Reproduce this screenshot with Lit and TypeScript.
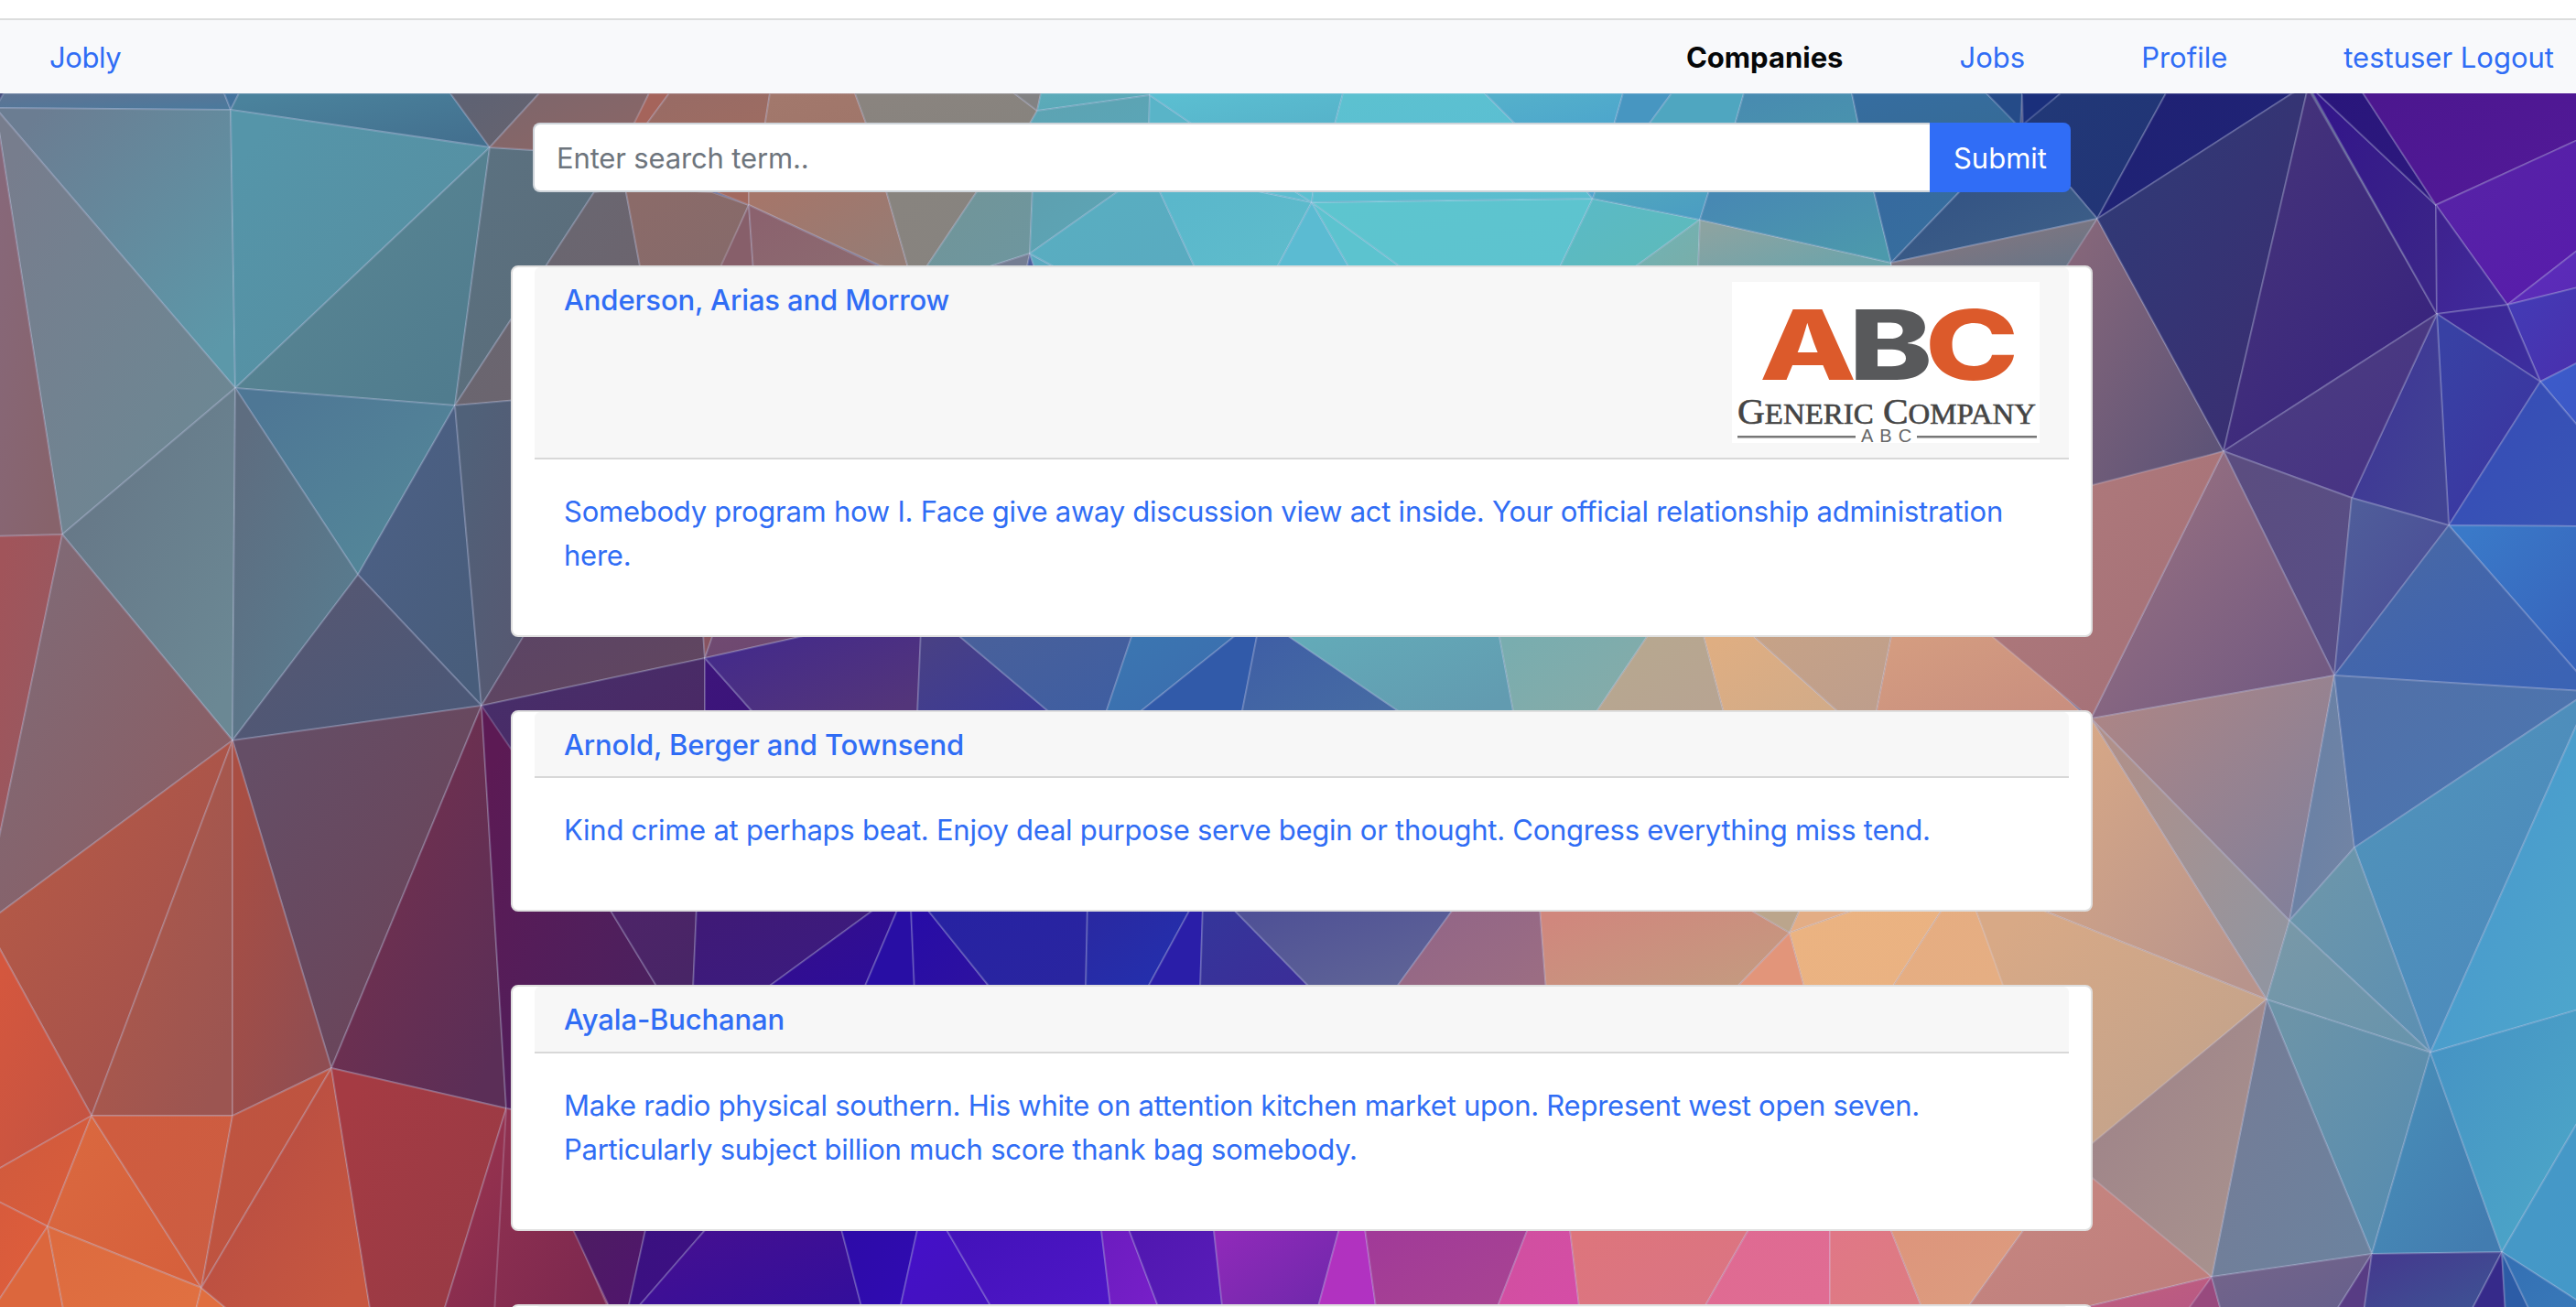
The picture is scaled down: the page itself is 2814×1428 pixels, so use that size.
import { LitElement, html, svg, css } from "lit";
import { customElement, property } from "lit/decorators.js";

/** Facets of the low-poly wallpaper: outline, start colour, end colour. */
const FACETS: [string, string, string][] = [
  // left side
  ["-5,118 4,102 245,102 252,120", "#5d7494", "#4c799c"],
  ["245,102 261,102 252,120", "#42729d", "#44739b"],
  ["261,102 492,102 535,161 252,120", "#4a829c", "#43708f"],
  ["492,102 589,102 535,161", "#5e6273", "#66636f"],
  ["-5,118 252,120 257,424", "#6b7d92", "#5c98a9"],
  ["252,120 535,161 257,424", "#5595a9", "#568ea0"],
  ["257,424 535,161 497,443", "#5a8794", "#507c8e"],
  ["-5,118 257,424 68,584", "#777d8d", "#6c8894"],
  ["-5,118 68,584 -5,586", "#87687a", "#87636b"],
  ["257,424 497,443 391,628", "#4e7795", "#548899"],
  ["68,584 257,424 254,809", "#667686", "#6b8894"],
  ["257,424 391,628 254,809", "#5e6d80", "#587d90"],
  ["-5,586 68,584 -5,935", "#a1545a", "#955a62"],
  ["68,584 254,809 -5,1001 -5,935", "#806a76", "#8b5d63"],
  ["497,443 526,771 391,628", "#4c6086", "#485d7b"],
  ["391,628 526,771 254,809", "#575772", "#4b5877"],
  ["254,809 526,771 362,1167", "#654e66", "#6b4358"],
  ["-5,1001 254,809 100,1219 -5,1028", "#b65a46", "#a1504d"],
  ["254,809 254,1219 100,1219", "#b15949", "#9c5551"],
  ["254,809 362,1167 254,1219", "#a94e43", "#8f4d52"],
  ["526,771 553,1211 362,1167", "#77314c", "#5b2e57"],
  ["-5,1028 100,1219 -5,1279", "#d4573e", "#c45342"],
  ["100,1219 -5,1279 -5,1311 52,1340", "#d05a3d", "#d95d3b"],
  ["-5,1311 52,1340 -5,1426", "#d85b3c", "#df5e3b"],
  ["-5,1426 52,1340 70,1435 -5,1435", "#dc673d", "#dc673d"],
  ["100,1219 220,1407 52,1340", "#da683f", "#d6603c"],
  ["100,1219 254,1219 220,1407", "#cf5c3f", "#cc5d42"],
  ["254,1219 362,1167 220,1407", "#be5440", "#bf5340"],
  ["52,1340 220,1407 213,1435 70,1435", "#dd6b3f", "#e07041"],
  ["220,1407 254,1435 213,1435", "#e06e3f", "#e06e3f"],
  ["362,1167 405,1435 254,1435 220,1407", "#b54c43", "#c75740"],
  ["362,1167 553,1211 484,1435 405,1435", "#a53b43", "#983a45"],
  ["553,1211 640,1330 667,1435 484,1435", "#9a344e", "#7b274f"],
  ["535,161 610,166 690,205 649,210 497,443", "#5b7180", "#5a6b78"],
  ["535,161 589,102 709,102 692,140 600,165", "#7e666b", "#8b6666"],
  ["497,443 649,210 683,205 700,296 600,434", "#696872", "#6c636d"],
  ["497,443 600,434 600,650 526,771", "#506179", "#585770"],
  ["526,771 590,665 768,690 770,719", "#5b4465", "#61465f"],
  ["526,771 770,719 770,785 548,860", "#472e6a", "#4b2864"],
  ["526,771 590,865 590,990 664,990 720,1082 600,1220 553,1211", "#5c1a54", "#4a2160"],
  // between the navigation bar and the search field
  ["709,102 731,102 703,140 690,140", "#a5645b", "#a5645b"],
  ["731,102 841,102 835,140 703,140", "#986b65", "#9d6c62"],
  ["841,102 934,102 948,140 835,140", "#a2786c", "#a0766a"],
  ["934,102 1108,102 1133,121 1122,140 948,140", "#8a847f", "#87837e"],
  ["1108,102 1137,102 1133,121", "#828283", "#828283"],
  ["1137,102 1256,102 1256,104 1133,121", "#5cabb9", "#58a7b7"],
  ["1133,121 1256,104 1255,140 1133,140 1122,140", "#5da3b2", "#5ba5b6"],
  ["1256,104 1309,140 1255,140", "#59b4c8", "#59b4c8"],
  ["1256,102 1467,102 1457,140 1309,140 1256,104", "#5bbed1", "#56b3ca"],
  ["1467,102 1622,102 1660,140 1457,140", "#5cc1d0", "#5bbfd2"],
  ["1622,102 1773,102 1762,140 1660,140", "#54b0cb", "#4da6cc"],
  ["1773,102 1826,102 1798,140 1762,140", "#4796c1", "#4796c1"],
  ["1826,102 1905,102 1894,140 1798,140", "#4fa6c0", "#4fa6c0"],
  ["1905,102 2023,102 2031,140 1894,140", "#488bb0", "#4992ae"],
  ["2023,102 2170,102 2210,140 2031,140", "#366d9f", "#366b98"],
  ["2170,102 2209,102 2207,140", "#254b88", "#254b88"],
  ["2209,102 2251,102 2210,140", "#1a2f7b", "#1a2f7b"],
  ["2251,102 2366,102 2291,239 2262,205 2205,140", "#213877", "#223476"],
  // between the search field and the first card
  ["683,205 778,210 818,224 787,296 700,296", "#8b6b69", "#866a6a"],
  ["770,205 818,205 818,224", "#a2695f", "#a2695f"],
  ["818,205 967,205 993,296 961,290 818,224", "#a5766a", "#957c75"],
  ["818,224 823,296 785,296", "#875f6a", "#875f6a"],
  ["818,224 965,293 823,296", "#8b626e", "#8c6a70"],
  ["967,205 1070,205 1009,296 993,296", "#88847f", "#87837f"],
  ["1070,205 1128,205 1125,277 1066,296 1009,296", "#719599", "#6e969e"],
  ["1125,277 1121,296 1066,296", "#757e93", "#757e93"],
  ["1125,277 1131,296 1121,296", "#4d5f9e", "#4d5f9e"],
  ["1125,277 1160,296 1131,296", "#5aa9bf", "#5aa9bf"],
  ["1128,205 1227,205 1125,277", "#5da0b0", "#5da6b6"],
  ["1227,205 1265,205 1307,296 1160,296 1125,277", "#59aec1", "#59abc0"],
  ["1265,205 1355,205 1433,221 1393,296 1307,296", "#5ab7cb", "#5ebccc"],
  ["1355,205 1408,205 1433,221", "#5cbccf", "#5cbccf"],
  ["1408,205 1435,205 1433,221", "#5bbfd0", "#5bbfd0"],
  ["1433,221 1476,296 1393,296", "#5bbbd2", "#5bbbd2"],
  ["1433,221 1536,296 1476,296", "#5cc3cf", "#5cc3cf"],
  ["1433,221 1740,217 1702,296 1536,296", "#5dc5cf", "#5dc3cf"],
  ["1435,205 1730,205 1740,217 1433,221", "#5bbed0", "#5bbdce"],
  ["1730,205 1744,205 1740,217", "#4fa4cc", "#4fa4cc"],
  ["1740,217 1857,240 1780,296 1702,296", "#5abac6", "#5ebaba"],
  ["1740,217 1744,205 1868,205 1857,240", "#50a6bf", "#4b9dc2"],
  ["1857,240 1855,296 1780,296", "#70b3b6", "#78aeaa"],
  ["1857,240 2066,287 2066,296 1855,296", "#8ca3a1", "#6ba4ab"],
  ["1868,205 2046,205 2066,287 1857,240", "#4788b3", "#4c99ac"],
  ["2046,205 2145,205 2066,287", "#366a9f", "#376f9d"],
  ["2145,205 2262,205 2291,239 2066,287", "#335384", "#3e6088"],
  ["2066,287 2291,239 2258,296 2066,296", "#8b767d", "#677587"],
  ["2291,239 2429,493 2270,544 2258,290", "#84667a", "#5d5377"],
  // between the first and the second card
  ["768,690 780,690 770,719", "#875360", "#875360"],
  ["780,690 900,690 770,719", "#704a71", "#6d4770"],
  ["770,719 824,780 770,780", "#3d157b", "#3b147a"],
  ["770,719 900,690 1006,690 1002,782 826,782", "#432a8b", "#53357a"],
  ["1006,690 1042,690 1151,782 1002,782", "#484085", "#3b3a96"],
  ["1042,690 1238,690 1207,782 1151,782", "#48609b", "#3f5ea1"],
  ["1238,690 1355,690 1240,782 1207,782", "#3b76b1", "#3b6cae"],
  ["1355,690 1374,690 1356,782 1240,782", "#315aa9", "#315aa9"],
  ["1374,690 1400,690 1535,782 1356,782", "#3f5fa5", "#466ba3"],
  ["1400,690 1637,690 1654,782 1535,782", "#63aab8", "#629bb0"],
  ["1637,690 1803,690 1741,782 1654,782", "#79adaf", "#86aba8"],
  ["1803,690 1860,690 1884,782 1741,782", "#b7a88f", "#b7a492"],
  ["1860,690 1910,690 2013,782 1884,782", "#dfae82", "#d2ab88"],
  ["1910,690 2067,690 2049,782 2013,782", "#c6a287", "#be9e8c"],
  ["2067,690 2176,690 2278,782 2049,782", "#d49c80", "#c98f7f"],
  // between the second and the third card
  ["664,990 761,990 757,1082 720,1082", "#4d2468", "#482566"],
  ["761,990 960,990 834,1082 757,1082", "#3f1a77", "#3b1b80"],
  ["960,990 982,990 943,1082 834,1082", "#340e8b", "#2d0d98"],
  ["982,990 995,990 999,1082 943,1082", "#280ea4", "#280ea4"],
  ["995,990 1010,990 1084,1082 999,1082", "#270ca6", "#2d11a0"],
  ["1010,990 1188,990 1186,1082 1084,1082", "#2722a2", "#2925a0"],
  ["1188,990 1302,990 1252,1082 1186,1082", "#2929a2", "#2330ae"],
  ["1302,990 1314,990 1311,1082 1252,1082", "#2a1ea8", "#2a1ea8"],
  ["1314,990 1344,990 1434,1082 1311,1082", "#35359a", "#3b2e98"],
  ["1344,990 1590,990 1523,1082 1434,1082", "#4f5196", "#606596"],
  ["1590,990 1682,990 1689,1082 1523,1082", "#926587", "#9b6d83"],
  ["1682,990 1905,990 1955,1019 1894,1082 1689,1082", "#d0877d", "#c49a80"],
  ["1905,990 1968,990 1955,1019", "#bba58c", "#bba58c"],
  ["1955,1019 1972,1082 1894,1082", "#e2957a", "#e2957a"],
  ["1968,990 2038,990 1955,1019", "#e3ad85", "#e3ad85"],
  ["2038,990 2124,990 2065,1082 1972,1082 1955,1019", "#ebb381", "#eab282"],
  ["2124,990 2157,990 2192,1082 2065,1082", "#e6ad81", "#e5ae83"],
  // below the third card
  ["600,1220 628,1345 667,1435 540,1435 553,1211", "#8f3150", "#7d284f"],
  ["622,1335 707,1335 685,1435 669,1435", "#4d1c63", "#50156c"],
  ["707,1335 778,1335 691,1435 685,1435", "#3a1180", "#3d0f84"],
  ["778,1335 917,1335 943,1435 691,1435", "#451090", "#340e9b"],
  ["917,1335 1004,1335 982,1435 943,1435", "#2d0ba8", "#300bb2"],
  ["1004,1335 1029,1335 1087,1435 982,1435", "#4410c8", "#4412be"],
  ["1029,1335 1202,1335 1214,1435 1087,1435", "#4312ba", "#4e16c6"],
  ["1202,1335 1230,1335 1268,1435 1214,1435", "#6c1cc0", "#771fc8"],
  ["1230,1335 1325,1335 1336,1435 1268,1435", "#5017b0", "#591cb8"],
  ["1325,1335 1465,1335 1438,1435 1336,1435", "#8f2ab9", "#7028ab"],
  ["1465,1335 1490,1335 1504,1435 1438,1435", "#b132be", "#b132c2"],
  ["1490,1335 1672,1335 1633,1435 1504,1435", "#a13a98", "#a84492"],
  ["1672,1335 1714,1335 1726,1435 1633,1435", "#d0509f", "#d54da6"],
  ["1714,1335 1915,1335 1858,1435 1726,1435", "#dd757c", "#db7484"],
  ["1915,1335 1999,1335 1999,1435 1858,1435", "#df6a92", "#e06c93"],
  ["1999,1335 2062,1335 2102,1435 1999,1435", "#e07786", "#dd7c82"],
  ["2062,1335 2217,1335 2145,1435 2102,1435", "#dd957c", "#dc9d7f"],
  ["2217,1335 2290,1270 2416,1395 2270,1430 2145,1435", "#c78680", "#be7f7d"],
  // right side
  ["2366,102 2504,102 2291,239", "#1f2174", "#202476"],
  ["2504,102 2521,96 2429,493 2291,239", "#303a76", "#3a2e72"],
  ["2521,96 2662,343 2429,493", "#45347a", "#38237e"],
  ["2521,92 2661,224 2662,343", "#33168a", "#3b2588"],
  ["2521,92 2575,92 2661,224", "#29167b", "#2c187e"],
  ["2575,92 2820,92 2820,151 2661,224", "#4c178f", "#521998"],
  ["2661,224 2820,151 2820,270 2739,333", "#5623a6", "#581cab"],
  ["2739,333 2820,270 2820,313", "#5c2dbb", "#5a2ab6"],
  ["2739,333 2820,313 2820,394 2775,417", "#433bb5", "#4930ae"],
  ["2775,417 2820,394 2820,470", "#3c5bca", "#3c58c6"],
  ["2661,224 2739,333 2662,343", "#3e228f", "#402a9c"],
  ["2662,343 2739,333 2775,417", "#3c2696", "#3c2e9e"],
  ["2662,343 2775,417 2675,574", "#3841a4", "#3c34a0"],
  ["2775,417 2820,470 2820,575 2675,574", "#364bb6", "#3855b6"],
  ["2662,343 2675,574 2569,544", "#3d3396", "#424494"],
  ["2662,343 2569,544 2429,493", "#4b3e80", "#473284"],
  ["2429,493 2569,544 2550,738", "#5b4d80", "#584e86"],
  ["2569,544 2675,574 2550,738", "#4f5d9a", "#4a4a96"],
  ["2675,574 2820,575 2820,740", "#3a79c8", "#3764bc"],
  ["2675,574 2820,740 2820,755 2550,738", "#4968a4", "#3b63b4"],
  ["2429,493 2550,738 2284,785", "#997180", "#725a82"],
  ["2429,493 2284,785 2170,690 2270,534", "#b07a7b", "#a37078"],
  ["2550,738 2501,1006 2284,785", "#ab8586", "#83809a"],
  ["2284,785 2501,1006 2476,1092", "#b09089", "#9295a0"],
  ["2284,785 2476,1092 2225,992 2225,780", "#d8a886", "#b8948c"],
  ["2550,738 2572,926 2501,1006", "#6680a6", "#7284a4"],
  ["2550,738 2820,755 2820,761 2572,926", "#5170a8", "#4a77b2"],
  ["2572,926 2820,761 2820,780 2655,1150", "#5092ba", "#4c8abd"],
  ["2820,780 2820,1102 2655,1150", "#4896cc", "#4da5cc"],
  ["2501,1006 2572,926 2655,1150", "#6d96aa", "#5d90b2"],
  ["2501,1006 2655,1150 2476,1092", "#7898a8", "#6894ac"],
  ["2476,1092 2655,1150 2591,1370", "#6c94a8", "#568cb0"],
  ["2655,1150 2733,1368 2591,1370", "#488eb8", "#427cb0"],
  ["2655,1150 2820,1102 2820,1219 2733,1368", "#4694c4", "#4ca6c8"],
  ["2733,1368 2820,1219 2820,1424", "#4698c6", "#4498c8"],
  ["2476,1092 2591,1370 2416,1395", "#757c96", "#6c829e"],
  ["2157,990 2225,992 2476,1092 2270,1265 2190,1082", "#d8a986", "#c0a28c"],
  ["2476,1092 2416,1395 2270,1274 2270,1262", "#9e8288", "#a8928e"],
  ["2416,1395 2391,1435 2270,1435 2270,1430", "#c0607e", "#b85884"],
  ["2416,1395 2427,1435 2387,1435", "#984a7e", "#984a7e"],
  ["2416,1395 2591,1370 2550,1435 2427,1435", "#74648a", "#66608c"],
  ["2591,1370 2582,1435 2550,1435", "#583c84", "#583c84"],
  ["2591,1370 2733,1368 2698,1435 2582,1435", "#443a8e", "#3e5294"],
  ["2733,1368 2737,1435 2698,1435", "#362a8a", "#362a8a"],
  ["2733,1368 2765,1435 2737,1435", "#2c5ca6", "#2c5ca6"],
  ["2733,1368 2820,1424 2820,1435 2765,1435", "#3470b4", "#3878b8"],
];

@customElement("poly-wallpaper")
export class PolyWallpaper extends LitElement {
  static styles = css`
    :host {
      display: block;
      overflow: hidden;
      background: #47507f;
    }
    svg {
      display: block;
    }
    polygon {
      stroke: rgba(215, 220, 245, 0.22);
      stroke-width: 2;
      stroke-linejoin: round;
    }
  `;

  render() {
    return html`<svg width="2814" height="1326" viewBox="0 102 2814 1326" aria-hidden="true">
      <defs>
        ${FACETS.map(
          ([, from, to], i) => svg`<linearGradient id="f${i}" x1="0.1" y1="0.1" x2="0.9" y2="0.9">
            <stop offset="0" stop-color=${from}></stop><stop offset="1" stop-color=${to}></stop>
          </linearGradient>`
        )}
      </defs>
      ${FACETS.map(([points], i) => svg`<polygon points=${points} fill="url(#f${i})"></polygon>`)}
    </svg>`;
  }
}

@customElement("company-logo")
export class CompanyLogo extends LitElement {
  static styles = css`
    :host {
      display: block;
      width: 336px;
      height: 176px;
    }
    svg {
      display: block;
      overflow: visible;
      background: #fff;
    }
    .mark {
      font: 800 106px Inter, sans-serif;
    }
    .orange {
      fill: #dc5a2b;
    }
    .grey {
      fill: #58595b;
    }
    .name {
      font-family: "Liberation Serif", serif;
      fill: #454545;
      stroke: #454545;
      stroke-width: 0.6;
    }
    .cap {
      font-size: 39px;
    }
    .small {
      font-size: 31px;
    }
    .tag {
      font: 20px "Liberation Sans", sans-serif;
      letter-spacing: 7px;
      fill: #666;
    }
  `;

  render() {
    return html`<svg width="336" height="176" viewBox="0 0 336 176">
      <text class="mark" x="0" y="107" transform="translate(30 0) scale(1.3 1)" letter-spacing="-6.5"><tspan class="orange">A</tspan><tspan class="grey">B</tspan><tspan class="orange">C</tspan></text>
      <text class="name" x="6" y="155" textLength="326" lengthAdjust="spacingAndGlyphs"><tspan class="cap">G</tspan><tspan class="small">ENERIC</tspan><tspan class="cap"> C</tspan><tspan class="small">OMPANY</tspan></text>
      <rect x="6" y="168" width="129" height="2.5" fill="#777"></rect>
      <text class="tag" x="141" y="175">ABC</text>
      <rect x="202" y="168" width="131" height="2.5" fill="#777"></rect>
    </svg>`;
  }
}

@customElement("company-card")
export class CompanyCard extends LitElement {
  @property() name = "";
  @property() description = "";
  @property({ type: Boolean }) logo = false;

  static styles = css`
    :host {
      display: block;
      box-sizing: border-box;
      padding: 0 24px;
      background: #fff;
      border: 2px solid #dfdfdf;
      border-radius: 8px;
      color: #306df5;
    }
    .header {
      display: flex;
      justify-content: space-between;
      align-items: flex-start;
      padding: 16px 32px;
      background: #f7f7f7;
      border-bottom: 2px solid #d8d8d8;
      border-radius: 6px 6px 0 0;
    }
    .title {
      margin: 1px 0 -1px;
      min-height: 38.4px;
      font-size: 31px;
      font-weight: 500;
      line-height: 38.4px;
      letter-spacing: -0.13px;
    }
    .body {
      padding: 33px 30px 31px 32px;
    }
    .text {
      margin: 0 0 32px;
      line-height: 48px;
      letter-spacing: -0.25px;
    }
  `;

  render() {
    return html`
      <div class="header">
        <h6 class="title">${this.name}</h6>
        ${this.logo ? html`<company-logo></company-logo>` : null}
      </div>
      <div class="body"><p class="text">${this.description}</p></div>
    `;
  }
}

const COMPANIES = [
  {
    name: "Anderson, Arias and Morrow",
    description:
      "Somebody program how I. Face give away discussion view act inside. Your official relationship administration here.",
    logo: true,
  },
  {
    name: "Arnold, Berger and Townsend",
    description:
      "Kind crime at perhaps beat. Enjoy deal purpose serve begin or thought. Congress everything miss tend.",
    logo: false,
  },
  {
    name: "Ayala-Buchanan",
    description:
      "Make radio physical southern. His white on attention kitchen market upon. Represent west open seven. Particularly subject billion much score thank bag somebody.",
    logo: false,
  },
  { name: "", description: "", logo: false },
];

@customElement("app-root")
export class AppRoot extends LitElement {
  static styles = css`
    :host {
      display: flex;
      flex-direction: column;
      height: 1428px;
      overflow: hidden;
      background: #fff;
      font: 31px/48px Inter, "Liberation Sans", sans-serif;
      color: #306df5;
    }
    .nav {
      display: flex;
      align-items: center;
      flex: none;
      box-sizing: border-box;
      height: 82px;
      margin-top: 20px;
      padding: 2px 24px 0 54px;
      border-top: 2px solid #dcdddd;
      background: #f8f9fb;
    }
    .brand {
      letter-spacing: -0.4px;
    }
    .links {
      display: flex;
      gap: 127px;
      margin-left: auto;
    }
    .link {
      color: inherit;
      text-decoration: none;
      white-space: pre;
    }
    .active {
      color: #050708;
      font-weight: 700;
    }
    .stage {
      display: grid;
      height: 1326px;
      overflow: hidden;
    }
    .wall,
    .content {
      grid-area: 1 / 1;
    }
    .content {
      display: flex;
      flex-direction: column;
      gap: 80px;
      width: 1728px;
      margin-left: 558px;
      padding-top: 32px;
      z-index: 1;
    }
    .search {
      display: flex;
      height: 76px;
      margin: 0 24px;
    }
    .field {
      flex: 1;
      box-sizing: border-box;
      min-width: 0;
      padding: 2px 24px 0;
      border: 2px solid #ced4da;
      border-right: 0;
      border-radius: 8px 0 0 8px;
      background: #fff;
      font: inherit;
      letter-spacing: -0.15px;
    }
    .field::placeholder {
      color: #6e757d;
      opacity: 1;
    }
    .submit {
      width: 154px;
      padding: 2px 0 0;
      border: 0;
      border-radius: 0 8px 8px 0;
      background: #306df6;
      color: #fff;
      font: inherit;
    }
  `;

  render() {
    return html`
      <nav class="nav">
        <a class="link brand">Jobly</a>
        <div class="links">
          <a class="link active">Companies</a>
          <a class="link">Jobs</a>
          <a class="link">Profile</a>
          <a class="link">testuser Logout</a>
        </div>
      </nav>
      <div class="stage">
        <poly-wallpaper class="wall"></poly-wallpaper>
        <main class="content">
          <form class="search">
            <input class="field" placeholder="Enter search term.." />
            <button class="submit" type="button">Submit</button>
          </form>
          ${COMPANIES.map(
            (c) => html`<company-card .name=${c.name} .description=${c.description} .logo=${c.logo}></company-card>`
          )}
        </main>
      </div>
    `;
  }
}
